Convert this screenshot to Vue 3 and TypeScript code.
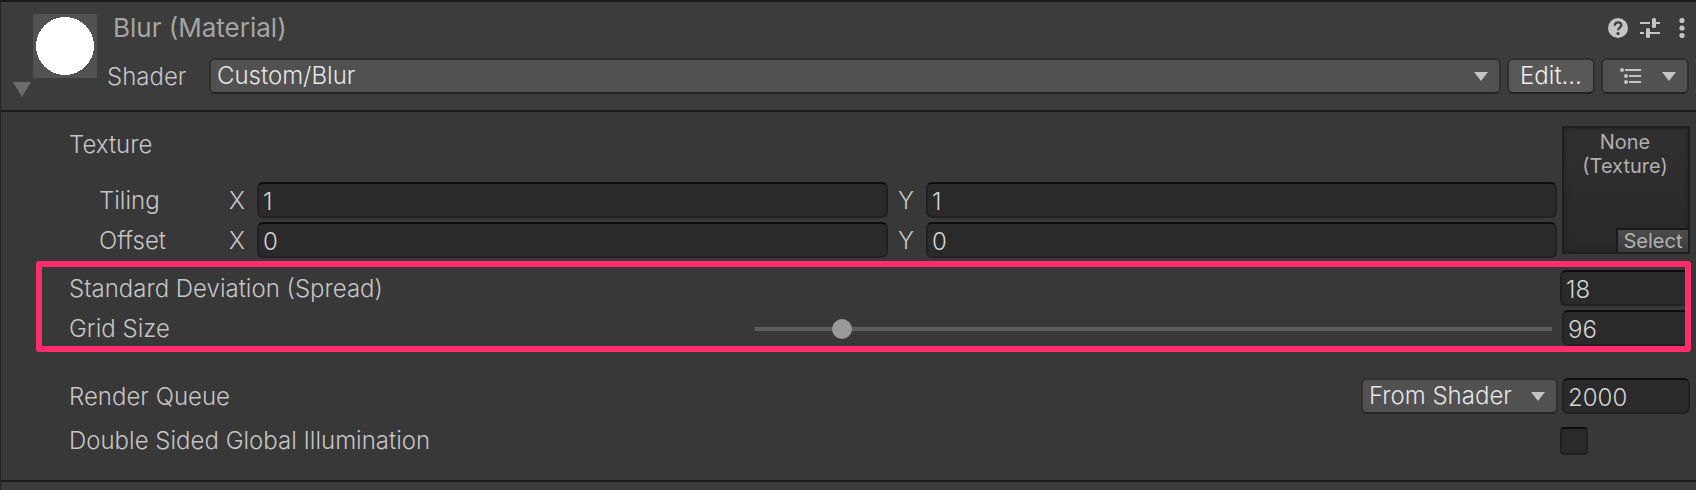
<script setup lang="ts">
import { reactive, ref } from 'vue'

interface VectorRow {
  label: string
  x: string
  y: string
}

const vectors = reactive<VectorRow[]>([
  { label: 'Tiling', x: '1', y: '1' },
  { label: 'Offset', x: '0', y: '0' },
])

const shader = ref('Custom/Blur')
const deviation = ref('18')
const gridSize = ref(96)
const queueSource = ref('From Shader')
const queue = ref('2000')
const doubleSided = ref(false)
</script>

<template>
  <main class="inspector">
    <header class="header">
      <button class="foldout" type="button" aria-label="Collapse material">
        <svg viewBox="0 0 18 15" width="18" height="15"><path d="M0 0h18L9 15z" fill="#6c6c6c" /></svg>
      </button>
      <div class="preview">
        <svg viewBox="0 0 64 64" width="64" height="64" shape-rendering="crispEdges"><circle cx="32" cy="32" r="29" fill="#fff" /></svg>
      </div>
      <div class="header-main">
        <div class="title-row">
          <h1 class="title">Blur (Material)</h1>
          <button class="icon" type="button" aria-label="Help">
            <svg viewBox="0 0 20 20" width="20" height="20">
              <circle cx="10" cy="10" r="10" fill="#c4c4c4" />
              <path d="M6.8 7.8C6.8 5.6 8.100 4.300 10 4.300s3.300 1.200 3.300 3c0 2.300-3.200 2.500-3.200 5" fill="none" stroke="#3c3c3c" stroke-width="2.200" />
              <circle cx="10" cy="15.500" r="1.600" fill="#3c3c3c" />
            </svg>
          </button>
          <button class="icon" type="button" aria-label="Presets">
            <svg viewBox="0 0 20 20" width="20" height="20" fill="#c4c4c4">
              <path d="M0 4h10v2H0zM16 4h4v2h-4zM0 14h4v2H0zM10 14h10v2H10z" />
              <rect x="12" y="0" width="4" height="10" rx="1.500" />
              <rect x="6" y="10" width="4" height="10" rx="1.500" />
            </svg>
          </button>
          <button class="icon more" type="button" aria-label="More options">
            <svg viewBox="0 0 6 20" width="6" height="20" fill="#c4c4c4">
              <circle cx="3" cy="2.500" r="2.600" /><circle cx="3" cy="10" r="2.600" /><circle cx="3" cy="17.500" r="2.600" />
            </svg>
          </button>
        </div>
        <div class="shader-row">
          <label class="shader-label" for="shader">Shader</label>
          <div class="dropdown shader-dropdown">
            <select id="shader" v-model="shader"><option>Custom/Blur</option></select>
            <svg class="arrow" viewBox="0 0 14 9" width="14" height="9"><path d="M0 0h14L7 9z" fill="#c4c4c4" /></svg>
          </div>
          <button class="button" type="button">Edit...</button>
          <button class="button list-button" type="button" aria-label="Shader list">
            <svg viewBox="0 0 22 16" width="22" height="16" fill="#c4c4c4">
              <circle cx="2" cy="2" r="2" /><circle cx="6" cy="8" r="2" /><circle cx="6" cy="14" r="2" />
              <path d="M5 1h16v2H5zM9 7h12v2H9zM9 13h12v2H9z" />
            </svg>
            <svg viewBox="0 0 14 9" width="14" height="9"><path d="M0 0h14L7 9z" fill="#c4c4c4" /></svg>
          </button>
        </div>
      </div>
    </header>

    <section class="body">
      <div class="texture">
        <div class="texture-fields">
          <div class="texture-label">Texture</div>
          <div v-for="row in vectors" :key="row.label" class="vector">
            <span>{{ row.label }}</span>
            <label :for="row.label + '-x'">X</label>
            <input :id="row.label + '-x'" v-model="row.x" class="field" type="text" />
            <label class="y-label" :for="row.label + '-y'">Y</label>
            <input :id="row.label + '-y'" v-model="row.y" class="field" type="text" />
          </div>
        </div>
        <div class="slot">
          <span class="slot-text">None<br />(Texture)</span>
          <button class="slot-select" type="button">Select</button>
        </div>
      </div>

      <div class="highlight">
        <div class="row">
          <label class="name" for="deviation">Standard Deviation (Spread)</label>
          <input id="deviation" v-model="deviation" class="field deviation" type="text" />
        </div>
        <div class="row grid-row">
          <label class="name" for="grid-size">Grid Size</label>
          <input id="grid-size" v-model.number="gridSize" class="slider" type="range" min="1" max="960" />
          <input v-model.number="gridSize" class="field grid-value" type="text" aria-label="Grid Size value" />
        </div>
      </div>

      <div class="row queue-row">
        <label class="name" for="queue-source">Render Queue</label>
        <div class="dropdown queue-dropdown">
          <select id="queue-source" v-model="queueSource"><option>From Shader</option></select>
          <svg class="arrow" viewBox="0 0 14 9" width="14" height="9"><path d="M0 0h14L7 9z" fill="#c4c4c4" /></svg>
        </div>
        <input v-model="queue" class="field queue-value" type="text" aria-label="Render queue value" />
      </div>
      <div class="row sided-row">
        <label class="name" for="double-sided">Double Sided Global Illumination</label>
        <input id="double-sided" v-model="doubleSided" class="check" type="checkbox" />
      </div>
    </section>
  </main>
</template>

<style>
body {
  background: #3c3c3c;
}
</style>

<style scoped>
.inspector,
.inspector * {
  box-sizing: border-box;
}
.inspector {
  min-height: 100vh;
  border-left: 1px solid #232323;
  border-top: 2px solid #1a1a1a;
  background: #3c3c3c;
  color: #c4c4c4;
  font: 350 24px/36px Inter, "Liberation Sans", sans-serif;
}
button,
input,
select {
  margin: 0;
  font: inherit;
  color: inherit;
}
svg {
  display: block;
}
.header {
  display: flex;
  align-items: flex-start;
  padding: 8px 7px 13px 12px;
}
.foldout {
  margin-top: 72px;
  padding: 0;
  border: 0;
  background: none;
}
.preview {
  margin: 4px 0 0 2px;
  background: #525252;
}
.header-main {
  flex: 1;
  min-width: 0;
  padding-left: 10px;
}
.title-row {
  display: flex;
  align-items: center;
  height: 36px;
  padding-right: 4px;
}
.title {
  flex: 1;
  margin: 0;
  padding-left: 6px;
  font-size: 26px;
  font-weight: 400;
  color: #a4a4a4;
}
.icon {
  margin-left: 12px;
  padding: 0;
  border: 0;
  background: none;
}
.more {
  margin-left: 19px;
}
.shader-row {
  display: flex;
  gap: 6px;
  margin-top: 12px;
}
.shader-label {
  width: 96px;
  height: 36px;
  line-height: 38px;
}
.dropdown {
  display: grid;
  align-items: center;
}
.shader-dropdown {
  flex: 1;
}
.dropdown select {
  grid-area: 1 / 1;
  width: 100%;
  height: 36px;
  padding: 0 32px 0 6px;
  border: 2px solid #303030;
  border-bottom-color: #242424;
  border-radius: 6px;
  appearance: none;
  background: #515151;
  color: #e4e4e4;
  line-height: 32px;
}
.arrow {
  grid-area: 1 / 1;
  justify-self: end;
  margin-right: 13px;
  pointer-events: none;
}
.button {
  width: 88px;
  height: 36px;
  padding: 0;
  border: 2px solid #303030;
  border-bottom-color: #242424;
  border-radius: 6px;
  background: #585858;
  color: #eeeeee;
  line-height: 32px;
}
.list-button {
  display: flex;
  align-items: center;
  justify-content: space-between;
  padding: 0 11px 0 17px;
  background: #515151;
}
.body {
  padding: 14px 5px 21px 35px;
  border-top: 2px solid #1a1a1a;
  border-bottom: 2px solid #1a1a1a;
  background: #383838;
}
.texture {
  display: flex;
  gap: 5px;
  padding-right: 1px;
}
.texture-fields {
  flex: 1;
  display: grid;
  gap: 4px;
}
.texture-label {
  height: 52px;
  padding-left: 33px;
  line-height: 38px;
}
.vector {
  display: grid;
  grid-template-columns: 130px 28px 1fr 38px 1fr;
  height: 36px;
  padding-left: 63px;
  line-height: 38px;
}
.y-label {
  padding-left: 10px;
}
.field {
  width: 100%;
  min-width: 0;
  height: 36px;
  padding: 2px 4px 0;
  border: 2px solid #212121;
  border-top-color: #0d0d0d;
  border-radius: 6px;
  background: #2a2a2a;
  color: #d2d2d2;
  line-height: 30px;
  outline: 0;
}
.slot {
  display: flex;
  flex-direction: column;
  align-items: flex-end;
  justify-content: space-between;
  width: 128px;
  height: 128px;
  padding-top: 2px;
  border: 2px solid #1f1f1f;
  background: linear-gradient(#303030, #292929);
  box-shadow: inset 0 0 4px #1f1f1f;
  color: #b0b0b0;
  font-size: 20px;
  font-weight: 400;
  line-height: 24px;
  text-align: center;
}
.slot-text {
  width: 100%;
  padding-right: 2px;
}
.slot-select {
  width: 72px;
  height: 24px;
  padding: 0;
  border: 0;
  border-top: 2px solid #1a1a1a;
  border-left: 2px solid #1a1a1a;
  background: linear-gradient(#4c4c4c, #3a3a3a);
  line-height: 20px;
}
.highlight {
  display: grid;
  gap: 4px;
  margin-top: 3px;
  padding-top: 3px;
  border: 6px solid #ff2d6b;
  border-radius: 3px;
}
.row {
  display: flex;
  height: 36px;
}
.name {
  flex: 1;
  padding-left: 27px;
  line-height: 38px;
}
.deviation,
.grid-value {
  border-right: 0;
  border-radius: 6px 0 0 6px;
}
.deviation {
  width: 125px;
}
.grid-row {
  display: grid;
  grid-template-columns: 713px 1fr 123px;
}
.slider {
  align-self: center;
  width: calc(100% - 10px);
  height: 20px;
  appearance: none;
  background: linear-gradient(#5e5e5e, #5e5e5e) center / 100% 4px no-repeat;
}
.slider::-webkit-slider-thumb {
  width: 20px;
  height: 20px;
  border-radius: 50%;
  appearance: none;
  background: #999999;
}
.queue-row {
  gap: 4px;
  margin-top: 26px;
  padding-right: 1px;
}
.queue-row .name,
.sided-row .name {
  padding-left: 33px;
}
.queue-dropdown {
  width: 197px;
}
.queue-value {
  width: 128px;
}
.sided-row {
  align-items: center;
  margin-top: 9px;
  padding-right: 103px;
}
.sided-row .name {
  line-height: 36px;
}
.check {
  width: 28px;
  height: 28px;
  border: 2px solid #212121;
  border-top-color: #0d0d0d;
  border-radius: 4px;
  appearance: none;
  background: #2a2a2a;
}
.check:checked {
  background: #c4c4c4;
}
</style>
